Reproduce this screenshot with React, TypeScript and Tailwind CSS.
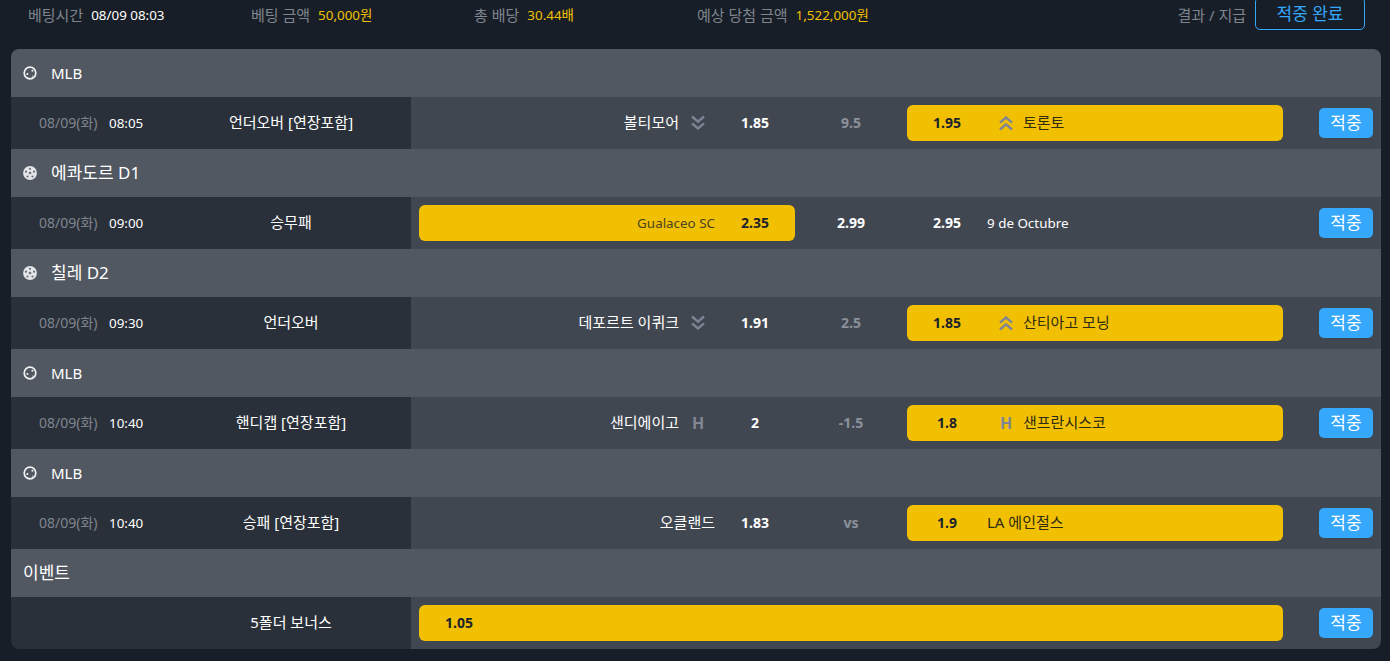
import type { ReactNode } from 'react'

type Marker = 'ou' | 'h' | null
type Row = {
  league: string
  ball?: 'baseball' | 'soccer'
  date?: string
  time?: string
  market: string
  home?: string
  homeOdds?: string
  mid?: string
  midBright?: boolean
  away?: string
  awayOdds?: string
  marker?: Marker
  picked: 'home' | 'away' | 'event'
}

const ROWS: Row[] = [
  { league: 'MLB', ball: 'baseball', date: '08/09(화)', time: '08:05', market: '언더오버 [연장포함]', home: '볼티모어', homeOdds: '1.85', mid: '9.5', away: '토론토', awayOdds: '1.95', marker: 'ou', picked: 'away' },
  { league: '에콰도르 D1', ball: 'soccer', date: '08/09(화)', time: '09:00', market: '승무패', home: 'Gualaceo SC', homeOdds: '2.35', mid: '2.99', midBright: true, away: '9 de Octubre', awayOdds: '2.95', picked: 'home' },
  { league: '칠레 D2', ball: 'soccer', date: '08/09(화)', time: '09:30', market: '언더오버', home: '데포르트 이퀴크', homeOdds: '1.91', mid: '2.5', away: '산티아고 모닝', awayOdds: '1.85', marker: 'ou', picked: 'away' },
  { league: 'MLB', ball: 'baseball', date: '08/09(화)', time: '10:40', market: '핸디캡 [연장포함]', home: '샌디에이고', homeOdds: '2', mid: '-1.5', away: '샌프란시스코', awayOdds: '1.8', marker: 'h', picked: 'away' },
  { league: 'MLB', ball: 'baseball', date: '08/09(화)', time: '10:40', market: '승패 [연장포함]', home: '오클랜드', homeOdds: '1.83', mid: 'vs', away: 'LA 에인절스', awayOdds: '1.9', picked: 'away' },
  { league: '이벤트', market: '5폴더 보너스', awayOdds: '1.05', picked: 'event' },
]

const isLatin = (s?: string) => !!s && !/[가-힣]/.test(s)

function BaseballIcon() {
  return (
    <svg width="14" height="14" viewBox="0 0 14 14" fill="none" className="shrink-0">
      <circle cx="7" cy="7" r="5.8" stroke="#f1f3f5" strokeWidth="1.7" />
      <circle cx="4.4" cy="8" r="1" fill="#f1f3f5" />
      <circle cx="9.4" cy="4.8" r="1" fill="#f1f3f5" />
      <circle cx="9.6" cy="10" r="0.6" fill="#f1f3f5" />
    </svg>
  )
}

function SoccerIcon() {
  return (
    <svg width="14" height="14" viewBox="0 0 14 14" className="shrink-0">
      <circle cx="7" cy="7" r="6.9" fill="#e4e6e9" />
      <g fill="#6b717b">
        <circle cx="7" cy="7" r="1.3" />
        <circle cx="7" cy="2.8" r="1.1" />
        <circle cx="3" cy="5.7" r="1.1" />
        <circle cx="11" cy="5.7" r="1.1" />
        <circle cx="4.5" cy="10.5" r="1.1" />
        <circle cx="9.5" cy="10.5" r="1.1" />
      </g>
    </svg>
  )
}

function DoubleChevron({ up }: { up?: boolean }) {
  return (
    <svg width="16" height="16" viewBox="0 0 16 16" fill="none" stroke="#7d8595" strokeWidth="2.4" className={up ? 'shrink-0 rotate-180' : 'shrink-0'}>
      <path d="M2 1.5l6 5.2 6-5.2" />
      <path d="M2 8.3l6 5.2 6-5.2" />
    </svg>
  )
}

function MarkerIcon({ marker, up }: { marker: Marker; up?: boolean }) {
  if (marker === 'ou') return <DoubleChevron up={up} />
  return <span className="w-4 shrink-0 text-center text-[16px] font-bold leading-4 text-[#808793]">H</span>
}

function BetBox({ active, side, children }: { active: boolean; side: 'left' | 'right'; children: ReactNode }) {
  return (
    <div className={`flex h-9 w-[376px] items-center rounded-md ${active ? 'bg-[#f2c002] text-[#1d232b]' : 'text-white'} ${side === 'left' ? 'justify-end' : ''}`}>
      {children}
    </div>
  )
}

function Odds({ value }: { value?: string }) {
  return <span className="w-20 shrink-0 pb-[2px] text-center text-[14px] font-bold">{value}</span>
}

function Name({ value, color }: { value?: string; color: string }) {
  return <span className={`${isLatin(value) ? 'text-[13.4px]' : 'pb-[2px] text-[15px]'} ${color}`}>{value}</span>
}

function GameRow({ row }: { row: Row }) {
  return (
    <>
      <div className="flex h-12 items-center bg-[#525862] pl-3 text-white">
        {row.ball === 'baseball' && <BaseballIcon />}
        {row.ball === 'soccer' && <SoccerIcon />}
        <span className={`${row.ball ? 'ml-[14px]' : ''} ${isLatin(row.league) ? 'text-[15px]' : 'text-[17px]'}`}>{row.league}</span>
      </div>
      <div className="flex h-[52px]">
        <div className="flex w-[400px] shrink-0 items-center bg-[#2a3039]">
          <div className="flex w-40 shrink-0 items-center pl-7">
            <span className="w-[70px] pb-[2px] text-[14px] text-[#7f858e]">{row.date}</span>
            <span className="text-[13.4px] text-white">{row.time}</span>
          </div>
          <div className="w-60 pb-[2px] text-center text-[15px] text-white">{row.market}</div>
        </div>
        <div className="flex flex-1 items-center bg-[#414751] px-2">
          {row.picked === 'event' ? (
            <div className="flex h-9 w-[864px] items-center rounded-md bg-[#f2c002] text-[#1d232b]">
              <Odds value={row.awayOdds} />
            </div>
          ) : (
            <>
              <BetBox active={row.picked === 'home'} side="left">
                <Name value={row.home} color={row.picked === 'home' ? 'text-[#4a4420]' : 'text-white'} />
                {row.marker && (
                  <span className="ml-[11px] mr-[9px] flex"><MarkerIcon marker={row.marker} /></span>
                )}
                <Odds value={row.homeOdds} />
              </BetBox>
              <span className={`w-28 shrink-0 pb-[2px] text-center text-[14px] font-bold ${row.midBright ? 'text-white' : 'text-[#8b919b]'}`}>{row.mid}</span>
              <BetBox active={row.picked === 'away'} side="right">
                <Odds value={row.awayOdds} />
                {row.marker && (
                  <span className="ml-[11px] mr-[9px] flex"><MarkerIcon marker={row.marker} up /></span>
                )}
                <Name value={row.away} color={row.picked === 'away' ? 'text-[#2f2c14]' : 'text-white'} />
              </BetBox>
            </>
          )}
          <button className="ml-9 h-[30px] w-[54px] shrink-0 rounded-[5px] bg-[#35a8fb] text-[17px] text-white">적중</button>
        </div>
      </div>
    </>
  )
}

function Stat({ label, value, accent }: { label: string; value: string; accent?: boolean }) {
  return (
    <div className="flex w-[223px] shrink-0 items-center">
      <span className="mr-2 text-[15px] text-[#7f858e]">{label}</span>
      <span className={`text-[13.4px] ${accent ? 'text-[#f2c002]' : 'text-white'}`}>{value}</span>
    </div>
  )
}

export default function App() {
  return (
    <div className="h-[661px] w-[1390px] overflow-hidden bg-[#171e27] font-['Noto_Sans','Noto_Sans_CJK_KR',sans-serif]">
      <div className="flex h-[49px] items-start pl-7 pr-[25px]">
        <div className="flex h-[30px] items-center">
          <Stat label="베팅시간" value="08/09 08:03" />
          <Stat label="베팅 금액" value="50,000원" accent />
          <Stat label="총 배당" value="30.44배" accent />
          <Stat label="예상 당첨 금액" value="1,522,000원" accent />
        </div>
        <div className="ml-auto flex h-[30px] items-center">
          <span className="mr-[9px] text-[15px] text-[#7f858e]">결과 / 지급</span>
          <button className="-mt-[3px] h-[33px] w-[110px] rounded-[5px] border border-[#35a8fb] pt-px text-[17px] text-[#35a8fb]">적중 완료</button>
        </div>
      </div>
      <div className="mx-[11px] w-[1370px] overflow-hidden rounded-lg">
        {ROWS.map((row, i) => (
          <GameRow key={i} row={row} />
        ))}
      </div>
    </div>
  )
}
